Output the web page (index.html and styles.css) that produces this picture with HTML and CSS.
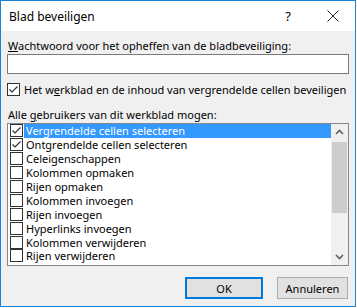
FILE: index.html
```html
<!DOCTYPE html>
<html>
<head>
    <title>Blad beveiligen</title>
    <link rel="stylesheet" href="styles.css">
</head>
<body>
    <div class="dialog">
        <div class="titlebar">
            <span class="title">Blad beveiligen</span>
            <span class="help">?</span>
            <svg class="close" width="12" height="12" viewBox="0 0 12 12">
                <path d="M0.5 0.5 L11.5 11.5 M11.5 0.5 L0.5 11.5" stroke="#222" stroke-width="1" fill="none"/>
            </svg>
        </div>
        <div class="content">
            <div class="label"><u>W</u>achtwoord voor het opheffen van de bladbeveiliging:</div>
            <input type="password" class="password">
            <div class="check_row">
                <span class="box checked"></span>
                <span>Het w<u>e</u>rkblad en de inhoud van vergrendelde cellen beveiligen</span>
            </div>
            <div class="label list_label">Alle <u>g</u>ebruikers van dit werkblad mogen:</div>
            <div class="listbox">
                <div class="items">
                    <div class="item selected"><span class="box checked"></span><span class="text">Vergrendelde cellen selecteren</span></div>
                    <div class="item"><span class="box checked"></span><span class="text">Ontgrendelde cellen selecteren</span></div>
                    <div class="item"><span class="box"></span><span class="text">Celeigenschappen</span></div>
                    <div class="item"><span class="box"></span><span class="text">Kolommen opmaken</span></div>
                    <div class="item"><span class="box"></span><span class="text">Rijen opmaken</span></div>
                    <div class="item"><span class="box"></span><span class="text">Kolommen invoegen</span></div>
                    <div class="item"><span class="box"></span><span class="text">Rijen invoegen</span></div>
                    <div class="item"><span class="box"></span><span class="text">Hyperlinks invoegen</span></div>
                    <div class="item"><span class="box"></span><span class="text">Kolommen verwijderen</span></div>
                    <div class="item"><span class="box"></span><span class="text">Rijen verwijderen</span></div>
                </div>
                <div class="scrollbar">
                    <svg class="arrow" width="17" height="17" viewBox="0 0 17 17">
                        <path d="M5 10 L8.5 6.5 L12 10" stroke="#606060" stroke-width="1.6" fill="none"/>
                    </svg>
                    <div class="track"><div class="thumb"></div></div>
                    <svg class="arrow" width="17" height="17" viewBox="0 0 17 17">
                        <path d="M5 7 L8.5 10.5 L12 7" stroke="#606060" stroke-width="1.6" fill="none"/>
                    </svg>
                </div>
            </div>
            <div class="buttons">
                <button class="btn default">OK</button>
                <button class="btn">Annuleren</button>
            </div>
        </div>
    </div>
</body>
</html>
```

FILE: styles.css
```css
body {
    margin: 0;
    background-color: #ffffff;
    font-family: "Noto Sans", "Liberation Sans", sans-serif;
    font-size: 11px;
    color: #000000;
}
.dialog {
    width: 356px;
    height: 307px;
    box-sizing: border-box;
    border: 1px solid #1883d7;
    display: flex;
    flex-direction: column;
}
.titlebar {
    height: 30px;
    flex: none;
    background-color: #ffffff;
    display: flex;
    align-items: center;
    font-size: 12px;
}
.title {
    margin-left: 8px;
    flex: 1;
}
.help {
    margin-right: 36px;
    font-size: 13px;
}
.close {
    margin-right: 16px;
}
.content {
    flex: 1;
    background-color: #f0f0f0;
    padding: 7px 6px 0 6px;
    white-space: nowrap;
}
.label {
    line-height: 15px;
    margin-left: 1px;
}
.password {
    display: block;
    width: 342px;
    height: 20px;
    box-sizing: border-box;
    margin: 1px 0 0 0;
    border: 1px solid #7a7a7a;
    background-color: #ffffff;
}
.check_row {
    display: flex;
    align-items: center;
    margin-top: 7px;
    height: 17px;
}
.check_row .box {
    margin-right: 4px;
}
.box {
    width: 13px;
    height: 13px;
    box-sizing: border-box;
    border: 1px solid #333333;
    background-color: #ffffff;
    flex: none;
}
.box.checked {
    background-image: url("data:image/svg+xml,%3Csvg xmlns='http://www.w3.org/2000/svg' width='11' height='11'%3E%3Cpath d='M1.5 5.5 L4 8 L9.5 2.5' stroke='%23333' stroke-width='1.2' fill='none'/%3E%3C/svg%3E");
}
.list_label {
    margin-top: 9px;
}
.listbox {
    margin-top: 1px;
    width: 342px;
    height: 143px;
    box-sizing: border-box;
    border: 1px solid #828790;
    background-color: #ffffff;
    display: flex;
}
.items {
    flex: 1;
    overflow: hidden;
}
.item {
    height: 13.9px;
    display: flex;
    align-items: center;
    padding-left: 2px;
}
.item .text {
    flex: 1;
    padding-left: 2px;
    margin-left: 1px;
    line-height: 13px;
    height: 13.9px;
    display: flex;
    align-items: center;
}
.item.selected .text {
    background-color: #3399ff;
    color: #ffffff;
}
.scrollbar {
    width: 17px;
    flex: none;
    background-color: #f0f0f0;
    display: flex;
    flex-direction: column;
}
.arrow {
    display: block;
    flex: none;
}
.track {
    flex: 1;
    padding: 1px 1px 0 1px;
}
.thumb {
    height: 71px;
    background-color: #cdcdcd;
}
.buttons {
    display: flex;
    justify-content: flex-end;
    gap: 14px;
    margin-top: 11px;
    margin-right: 1px;
}
.btn {
    height: 22px;
    box-sizing: border-box;
    border: 1px solid #adadad;
    background-color: #e1e1e1;
    font-family: "Noto Sans", "Liberation Sans", sans-serif;
    font-size: 11px;
    padding: 0;
    width: 71px;
}
.btn.default {
    width: 78px;
    border: 2px solid #0078d7;
}
```
